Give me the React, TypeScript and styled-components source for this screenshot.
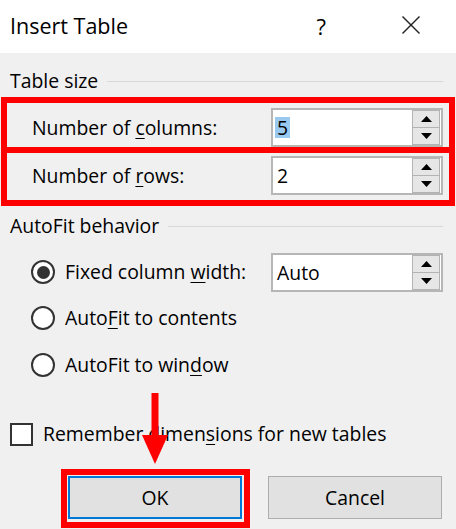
import React from "react";
import styled, { createGlobalStyle } from "styled-components";

const Global = createGlobalStyle`
  html, body { margin: 0; padding: 0; background: #f0f0f0; }
  body { font-family: "Open Sans", "Noto Sans", Arial, sans-serif; color: #000; }
`;

const Dialog = styled.div`
  width: 456px;
  height: 529px;
  background: #f0f0f0;
  overflow: hidden;
`;

const TitleBar = styled.div`
  height: 53px;
  background: #fff;
  display: flex;
  align-items: center;
  padding-left: 10px;
  box-sizing: border-box;
`;

const Title = styled.div`
  flex: 1;
  font-size: 21.5px;
  line-height: 26px;
  margin-top: -2px;
`;

const Help = styled.div`
  font-size: 22px;
  line-height: 26px;
  margin-right: 75px;
  margin-top: -2px;
`;

const CloseIcon = styled.svg`
  width: 20px;
  height: 18px;
  margin-right: 35px;
  margin-top: -4px;
`;

const Body = styled.div`
  padding: 17px 13px 0 10px;
  font-size: 19.4px;
  line-height: 22px;
`;

const SectionHeader = styled.div<{ $mt?: number }>`
  display: flex;
  align-items: center;
  gap: 9px;
  margin-top: ${(p) => p.$mt ?? 0}px;
  &::after {
    content: "";
    flex: 1;
    height: 1px;
    background: #d8d8d8;
  }
`;

const Highlight = styled.div<{ $t: number; $r: number; $b: number; $l: number }>`
  position: relative;
  &::after {
    content: "";
    position: absolute;
    top: ${(p) => -p.$t}px;
    right: ${(p) => -p.$r}px;
    bottom: ${(p) => -p.$b}px;
    left: ${(p) => -p.$l}px;
    border: 6px solid #ff0000;
    pointer-events: none;
  }
`;

const Row = styled.div<{ $mt?: number; $indent?: number }>`
  display: flex;
  align-items: center;
  height: 39px;
  margin-top: ${(p) => p.$mt ?? 0}px;
  padding-left: ${(p) => p.$indent ?? 22}px;
`;

const Label = styled.span`
  flex: 1;
  white-space: nowrap;
`;

const Key = styled.u`
  text-decoration-thickness: 1px;
  text-underline-offset: 3px;
`;

const SpinBox = styled.div`
  position: relative;
  width: 172px;
  height: 39px;
  box-sizing: border-box;
  border: 2px solid #b6b6b6;
  background: #fff;
  display: flex;
  align-items: center;
  padding-left: 2px;
`;

const Value = styled.span<{ $selected?: boolean }>`
  padding: 0 2px;
  line-height: 21px;
  background: ${(p) => (p.$selected ? "#99c9ef" : "transparent")};
`;

const SpinButtons = styled.div`
  position: absolute;
  right: 1px;
  top: 0px;
  bottom: 0px;
  width: 28px;
  display: flex;
  flex-direction: column;
`;

const SpinButton = styled.div`
  flex: 1;
  box-sizing: border-box;
  border: 1px solid #b3b3b3;
  background: #e6e6e6;
  display: flex;
  align-items: center;
  justify-content: center;
  & + & { border-top: none; }
`;

const Arrow = styled.svg`
  width: 11px;
  height: 6px;
`;

const RadioRow = styled.div<{ $mt?: number }>`
  display: flex;
  align-items: center;
  height: 38px;
  margin-top: ${(p) => p.$mt ?? 0}px;
  padding-left: 21px;
`;

const Radio = styled.span<{ $checked?: boolean }>`
  width: 24px;
  height: 24px;
  box-sizing: border-box;
  border-radius: 50%;
  border: 2px solid #333;
  background: #fff;
  display: flex;
  align-items: center;
  justify-content: center;
  margin-right: 10px;
  &::after {
    content: "";
    width: 13px;
    height: 13px;
    border-radius: 50%;
    background: ${(p) => (p.$checked ? "#333" : "transparent")};
  }
`;

const CheckRow = styled.div`
  display: flex;
  align-items: center;
  height: 24px;
  margin-top: 38px;
`;

const CheckBox = styled.span`
  width: 23px;
  height: 23px;
  box-sizing: border-box;
  border: 2px solid #333;
  background: #fff;
  margin-right: 10px;
`;

const ButtonRow = styled.div`
  display: flex;
  justify-content: flex-end;
  gap: 26px;
  margin-top: 30px;
  padding-right: 1px;
`;

const Button = styled.div<{ $default?: boolean }>`
  width: 174px;
  height: 43px;
  box-sizing: border-box;
  background: #e1e1e1;
  border: ${(p) => (p.$default ? "2px solid #0078d7" : "1px solid #adadad")};
  display: flex;
  align-items: center;
  justify-content: center;
`;

const ArrowDown = styled.svg`
  position: absolute;
  left: 74px;
  top: -83px;
  width: 26px;
  height: 71px;
  overflow: visible;
`;

const Spin = () => (
  <SpinButtons>
    <SpinButton>
      <Arrow viewBox="0 0 11 6">
        <polygon points="0,6 11,6 5.5,0" fill="#000" />
      </Arrow>
    </SpinButton>
    <SpinButton>
      <Arrow viewBox="0 0 11 6">
        <polygon points="0,0 11,0 5.5,6" fill="#000" />
      </Arrow>
    </SpinButton>
  </SpinButtons>
);

export default function App() {
  return (
    <>
      <Global />
      <Dialog>
        <TitleBar>
          <Title>Insert Table</Title>
          <Help>?</Help>
          <CloseIcon viewBox="0 0 20 18">
            <line x1="1.5" y1="0.5" x2="18.5" y2="17.5" stroke="#222" strokeWidth="1.4" />
            <line x1="18.5" y1="0.5" x2="1.5" y2="17.5" stroke="#222" strokeWidth="1.4" />
          </CloseIcon>
        </TitleBar>
        <Body>
          <SectionHeader>Table size</SectionHeader>
          <Highlight $t={11} $r={12} $b={6} $l={9}>
            <Row $mt={16}>
              <Label>
                Number of <Key>c</Key>olumns:
              </Label>
              <SpinBox>
                <Value $selected>5</Value>
                <Spin />
              </SpinBox>
            </Row>
          </Highlight>
          <Highlight $t={9} $r={12} $b={11} $l={9}>
            <Row $mt={9}>
              <Label>
                Number of <Key>r</Key>ows:
              </Label>
              <SpinBox>
                <Value>2</Value>
                <Spin />
              </SpinBox>
            </Row>
          </Highlight>
          <SectionHeader $mt={20}>AutoFit behavior</SectionHeader>
          <RadioRow $mt={16}>
            <Radio $checked />
            <Label>
              Fixed column <Key>w</Key>idth:
            </Label>
            <SpinBox>
              <Value>Auto</Value>
              <Spin />
            </SpinBox>
          </RadioRow>
          <RadioRow $mt={8}>
            <Radio />
            <Label>
              Auto<Key>F</Key>it to contents
            </Label>
          </RadioRow>
          <RadioRow $mt={9}>
            <Radio />
            <Label>
              AutoFit to win<Key>d</Key>ow
            </Label>
          </RadioRow>
          <CheckRow>
            <CheckBox />
            <Label>
              Remember dimen<Key>s</Key>ions for new tables
            </Label>
          </CheckRow>
          <ButtonRow>
            <Highlight $t={7} $r={8} $b={9} $l={7}>
              <Button $default>OK</Button>
              <ArrowDown viewBox="0 0 26 71">
                <rect x="9.5" y="0" width="7" height="46" fill="#ff0000" />
                <polygon points="0,42 26,42 13,71" fill="#ff0000" />
              </ArrowDown>
            </Highlight>
            <Button>Cancel</Button>
          </ButtonRow>
        </Body>
      </Dialog>
    </>
  );
}
